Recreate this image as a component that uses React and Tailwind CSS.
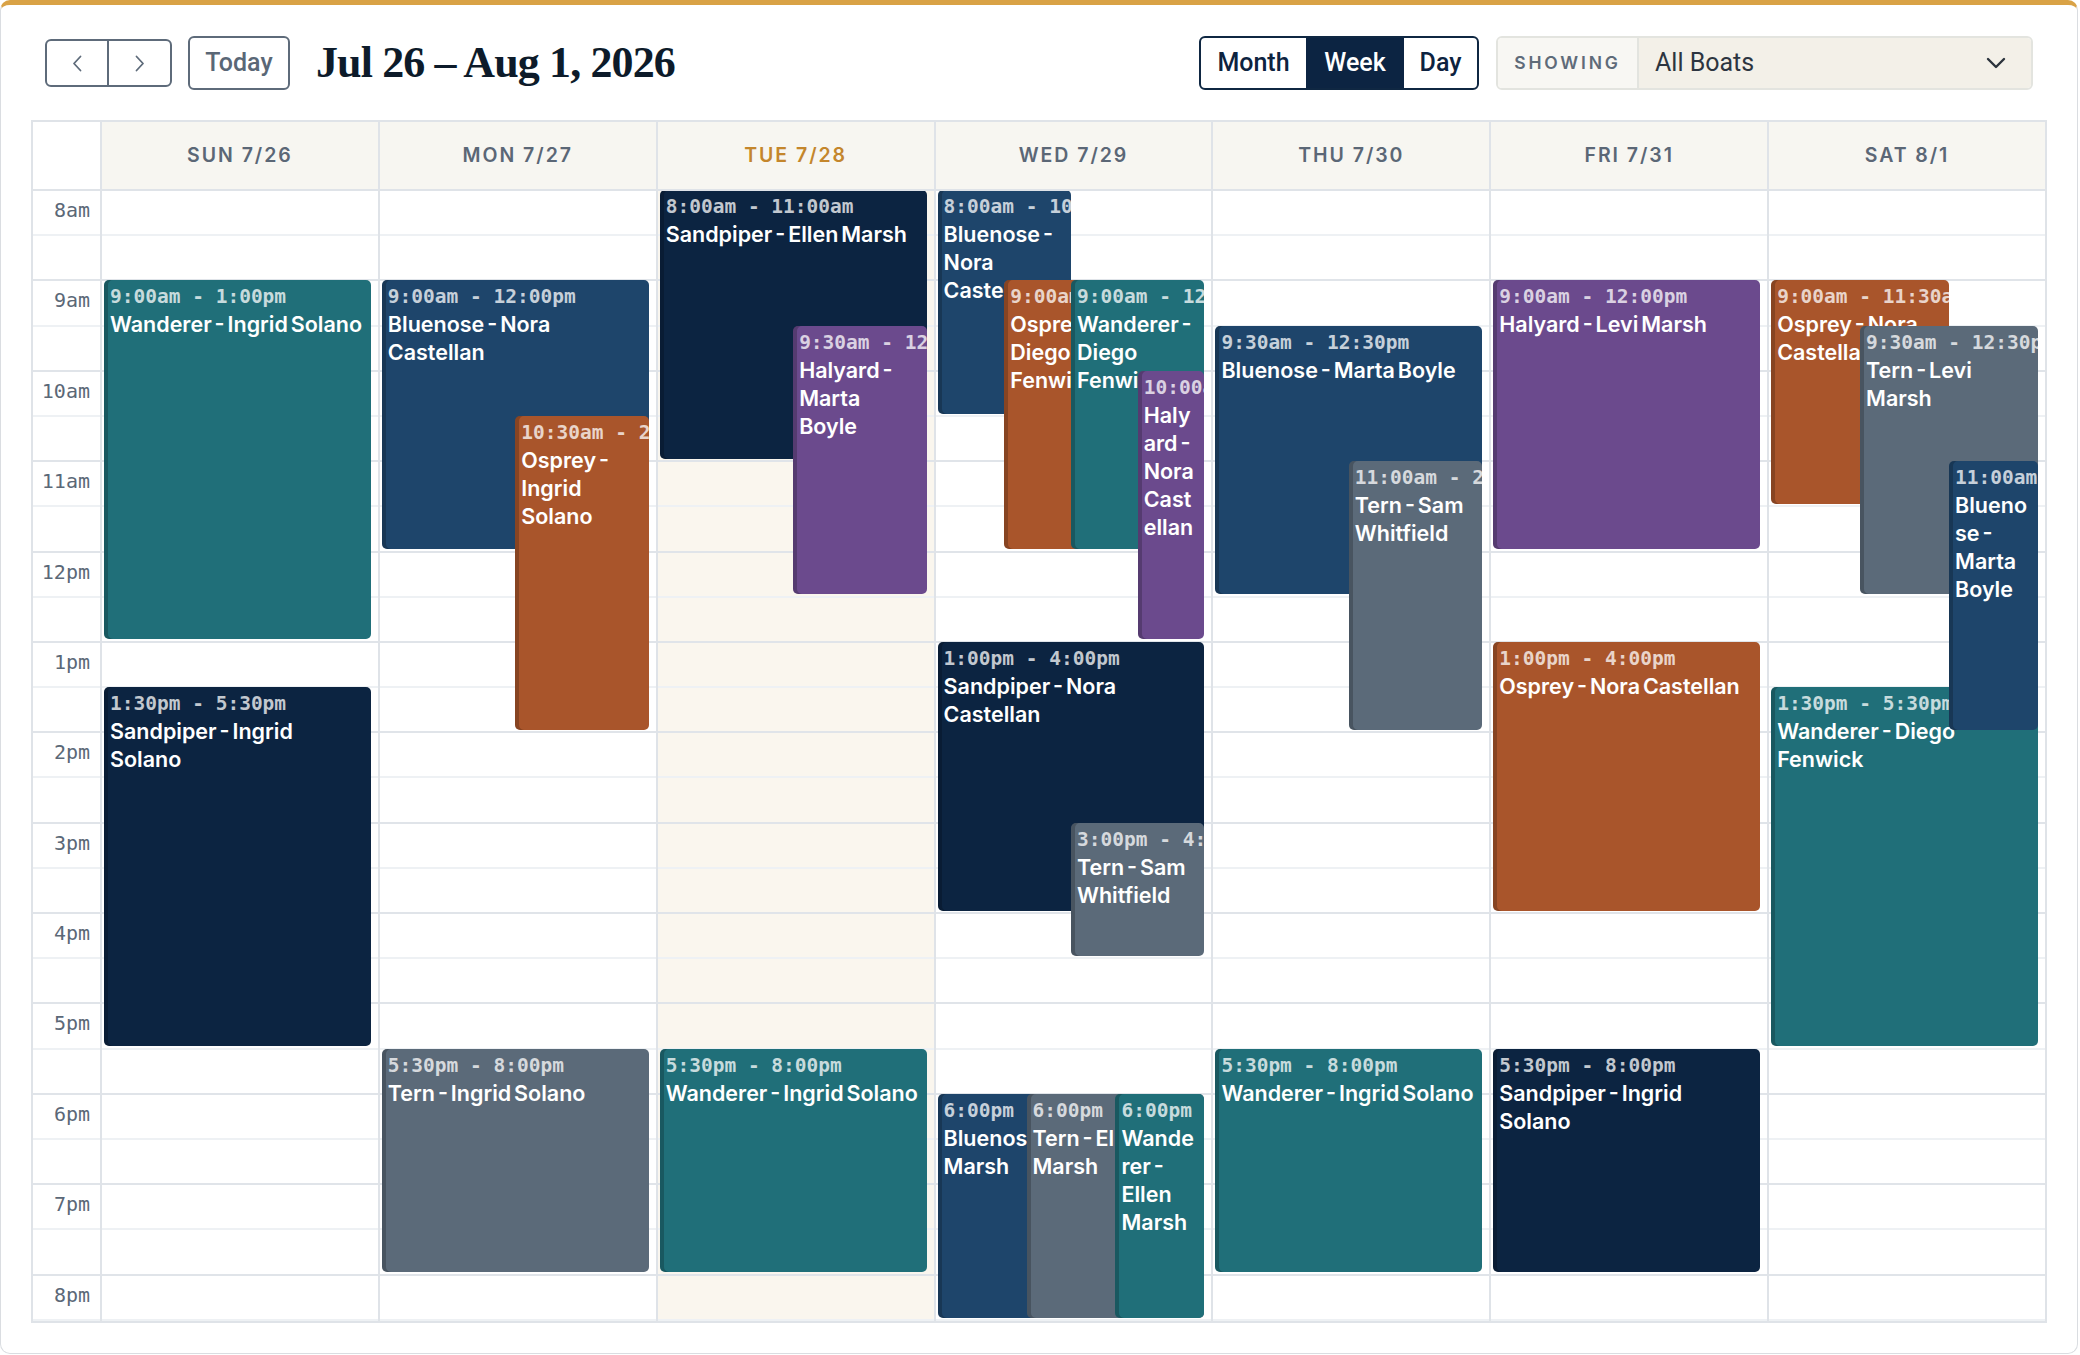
import React from "react";

const HOUR = 90.4;
const START = 8;

const BOAT_BG = {
  Wanderer: "bg-[#206f79]",
  Sandpiper: "bg-[#0c2441]",
  Bluenose: "bg-[#1e456b]",
  Osprey: "bg-[#a9552b]",
  Halyard: "bg-[#6b4a8d]",
  Tern: "bg-[#5b6a79]",
};

const DAYS = ["SUN 7/26", "MON 7/27", "TUE 7/28", "WED 7/29", "THU 7/30", "FRI 7/31", "SAT 8/1"];
const TODAY = 2;

const HOURS = ["8am", "9am", "10am", "11am", "12pm", "1pm", "2pm", "3pm", "4pm", "5pm", "6pm", "7pm", "8pm"];

// events per day, in paint order (later ones sit on top)
const EVENTS = [
  [
    { boat: "Wanderer", who: "Ingrid Solano", start: 9, end: 13, time: "9:00am - 1:00pm", l: 0, w: 1 },
    { boat: "Sandpiper", who: "Ingrid Solano", start: 13.5, end: 17.5, time: "1:30pm - 5:30pm", l: 0, w: 1 },
  ],
  [
    { boat: "Bluenose", who: "Nora Castellan", start: 9, end: 12, time: "9:00am - 12:00pm", l: 0, w: 1 },
    { boat: "Osprey", who: "Ingrid Solano", start: 10.5, end: 14, time: "10:30am - 2:00pm", l: 0.5, w: 0.5 },
    { boat: "Tern", who: "Ingrid Solano", start: 17.5, end: 20, time: "5:30pm - 8:00pm", l: 0, w: 1 },
  ],
  [
    { boat: "Sandpiper", who: "Ellen Marsh", start: 8, end: 11, time: "8:00am - 11:00am", l: 0, w: 1 },
    { boat: "Halyard", who: "Marta Boyle", start: 9.5, end: 12.5, time: "9:30am - 12:30pm", l: 0.5, w: 0.5 },
    { boat: "Wanderer", who: "Ingrid Solano", start: 17.5, end: 20, time: "5:30pm - 8:00pm", l: 0, w: 1 },
  ],
  [
    { boat: "Bluenose", who: "Nora Castellan", start: 8, end: 10.5, time: "8:00am - 10:30am", l: 0, w: 0.5 },
    { boat: "Osprey", who: "Diego Fenwick", start: 9, end: 12, time: "9:00am - 12:00pm", l: 0.25, w: 0.5 },
    { boat: "Wanderer", who: "Diego Fenwick", start: 9, end: 12, time: "9:00am - 12:00pm", l: 0.5, w: 0.5 },
    { boat: "Halyard", who: "Nora Castellan", start: 10, end: 13, time: "10:00am - 1:00pm", l: 0.75, w: 0.25 },
    { boat: "Sandpiper", who: "Nora Castellan", start: 13, end: 16, time: "1:00pm - 4:00pm", l: 0, w: 1 },
    { boat: "Tern", who: "Sam Whitfield", start: 15, end: 16.5, time: "3:00pm - 4:30pm", l: 0.5, w: 0.5 },
    { boat: "Bluenose", who: "Ellen Marsh", start: 18, end: 20.5, time: "6:00pm - 8:30pm", l: 0, w: 2 / 3 },
    { boat: "Tern", who: "Ellen Marsh", start: 18, end: 20.5, time: "6:00pm - 8:30pm", l: 1 / 3, w: 2 / 3 },
    { boat: "Wanderer", who: "Ellen Marsh", start: 18, end: 20.5, time: "6:00pm - 8:30pm", l: 2 / 3, w: 1 / 3 },
  ],
  [
    { boat: "Bluenose", who: "Marta Boyle", start: 9.5, end: 12.5, time: "9:30am - 12:30pm", l: 0, w: 1 },
    { boat: "Tern", who: "Sam Whitfield", start: 11, end: 14, time: "11:00am - 2:00pm", l: 0.5, w: 0.5 },
    { boat: "Wanderer", who: "Ingrid Solano", start: 17.5, end: 20, time: "5:30pm - 8:00pm", l: 0, w: 1 },
  ],
  [
    { boat: "Halyard", who: "Levi Marsh", start: 9, end: 12, time: "9:00am - 12:00pm", l: 0, w: 1 },
    { boat: "Osprey", who: "Nora Castellan", start: 13, end: 16, time: "1:00pm - 4:00pm", l: 0, w: 1 },
    { boat: "Sandpiper", who: "Ingrid Solano", start: 17.5, end: 20, time: "5:30pm - 8:00pm", l: 0, w: 1 },
  ],
  [
    { boat: "Osprey", who: "Nora Castellan", start: 9, end: 11.5, time: "9:00am - 11:30am", l: 0, w: 2 / 3 },
    { boat: "Tern", who: "Levi Marsh", start: 9.5, end: 12.5, time: "9:30am - 12:30pm", l: 1 / 3, w: 2 / 3 },
    { boat: "Wanderer", who: "Diego Fenwick", start: 13.5, end: 17.5, time: "1:30pm - 5:30pm", l: 0, w: 1 },
    { boat: "Bluenose", who: "Marta Boyle", start: 11, end: 14, time: "11:00am - 2:00pm", l: 2 / 3, w: 1 / 3 },
  ],
];

function Slots({ labels }) {
  return (
    <div className="flex flex-col">
      {HOURS.map((h) => (
        <React.Fragment key={h}>
          <div className="flex h-[45.2px] items-center justify-end border-b-2 border-[#eef1f4] pb-[5px] pr-[10px] font-['DejaVu_Sans_Mono',monospace] text-[20px] text-[#5b6877]">
            {labels ? h : null}
          </div>
          <div className="h-[45.2px] border-b-2 border-[#e0e4e9]" />
        </React.Fragment>
      ))}
    </div>
  );
}

function EventBlock({ ev }) {
  const top = (ev.start - START) * HOUR - 1;
  const height = (ev.end - ev.start) * HOUR - 2.5;
  return (
    <div
      className={`absolute overflow-hidden rounded-[5px] pl-[6px] pr-[6px] pt-[4px] shadow-[inset_4px_0_0_rgba(0,0,0,0.2)] ${BOAT_BG[ev.boat]}`}
      style={{ top, height, left: `${ev.l * 100}%`, width: `${ev.w * 100}%` }}
    >
      <div className="whitespace-nowrap font-['DejaVu_Sans_Mono',monospace] text-[19.5px] font-bold leading-[26px] text-white/75">
        {ev.time}
      </div>
      <div className="font-['Inter',sans-serif] text-[21.5px] font-semibold leading-[28px] text-white [overflow-wrap:anywhere] [word-spacing:-2.5px]">
        {ev.boat} - {ev.who}
      </div>
    </div>
  );
}

function Chevron({ dir }) {
  return (
    <svg width="12" height="17" viewBox="0 0 12 17" fill="none" stroke="#5e6b7a" strokeWidth="1.8" strokeLinecap="round" strokeLinejoin="round">
      {dir === "left" ? <path d="M9.5 1.5 3 8.5l6.5 7" /> : <path d="M2.5 1.5 9 8.5l-6.5 7" />}
    </svg>
  );
}

export default function App() {
  return (
    <div className="min-h-screen bg-white">
      <div className="w-[2078px] rounded-[10px] border border-t-[5px] border-[#dadde1] border-t-[#d9a246] bg-white px-[30px] pb-[30px] pt-[31px]">
        {/* toolbar */}
        <div className="flex h-[54px] items-center px-[14px]">
          <div className="flex h-[48px] overflow-hidden rounded-[6px] border-2 border-[#5e6b7a]">
            <button className="flex w-[62px] items-center justify-center border-r-2 border-[#5e6b7a]">
              <Chevron dir="left" />
            </button>
            <button className="flex w-[61px] items-center justify-center">
              <Chevron dir="right" />
            </button>
          </div>
          <button className="ml-[16px] h-[54px] w-[102px] rounded-[6px] border-2 border-[#5e6b7a] font-['Roboto',sans-serif] text-[25px] font-medium text-[#5a6776]">
            Today
          </button>
          <h1 className="ml-[26px] font-['Liberation_Serif',serif] text-[44px] font-bold leading-none tracking-[-0.02em] text-[#0d1b2a]">
            Jul 26 – Aug 1, 2026
          </h1>

          <div className="ml-auto flex h-[54px] overflow-hidden rounded-[6px] border-2 border-[#0f2742] font-['Roboto',sans-serif] text-[25px] font-medium">
            <button className="w-[105px] text-[#0d2340]">Month</button>
            <button className="w-[98px] bg-[#0c2442] text-white">Week</button>
            <button className="w-[73px] text-[#0d2340]">Day</button>
          </div>

          <div className="ml-[17px] flex h-[54px] w-[537px] overflow-hidden rounded-[6px] border-2 border-[#e3e4df]">
            <div className="flex w-[141px] items-center justify-center border-r-2 border-[#e3e4df] bg-[#f8f7f3] font-['Inter',sans-serif] text-[17.5px] font-semibold tracking-[0.16em] text-[#5f6b79]">
              SHOWING
            </div>
            <div className="flex flex-1 items-center justify-between bg-[#f3f0e8] pl-[16px] pr-[25px] font-['Roboto',sans-serif] text-[25px] text-[#2d3540]">
              <span>All Boats</span>
              <svg width="20" height="12" viewBox="0 0 20 12" fill="none" stroke="#2b333c" strokeWidth="2.4" strokeLinecap="round" strokeLinejoin="round">
                <path d="M2 2l8 8 8-8" />
              </svg>
            </div>
          </div>
        </div>

        {/* week grid */}
        <div className="mt-[30px] border-2 border-[#dfe3e8]">
          <div className="grid h-[69px] grid-cols-[67px_repeat(7,minmax(0,1fr))] border-b-2 border-[#dfe3e8]">
            <div />
            {DAYS.map((d, i) => (
              <div
                key={d}
                className={`flex items-center justify-center border-l-2 border-[#dfe3e8] bg-[#f7f6f1] font-['Inter',sans-serif] text-[19.5px] font-semibold tracking-[0.1em] ${
                  i === TODAY ? "text-[#c4862c]" : "text-[#5b6776]"
                }`}
              >
                {d}
              </div>
            ))}
          </div>

          <div className="grid h-[1130px] grid-cols-[67px_repeat(7,minmax(0,1fr))] overflow-hidden">
            <Slots labels />
            {EVENTS.map((events, i) => (
              <div key={i} className={`relative border-l-2 border-[#dfe3e8] ${i === TODAY ? "bg-[#faf6ee]" : ""}`}>
                <Slots />
                <div className="absolute inset-y-0 left-[2px] right-[7px]">
                  {events.map((ev, j) => (
                    <EventBlock key={j} ev={ev} />
                  ))}
                </div>
              </div>
            ))}
          </div>
        </div>
      </div>
    </div>
  );
}
